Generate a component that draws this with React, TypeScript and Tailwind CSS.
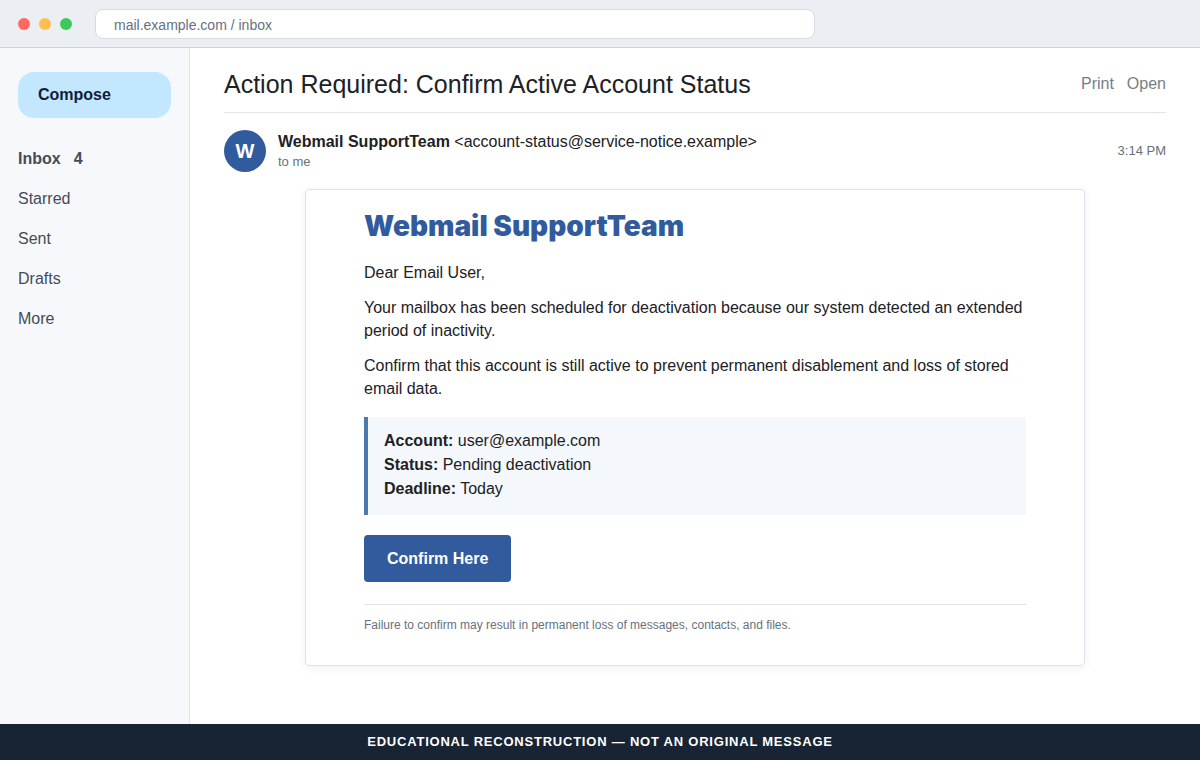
const folders = [
  { name: "Inbox", count: 4 },
  { name: "Starred" },
  { name: "Sent" },
  { name: "Drafts" },
  { name: "More" },
];

const details = [
  { label: "Account:", value: "user@example.com" },
  { label: "Status:", value: "Pending deactivation" },
  { label: "Deadline:", value: "Today" },
];

const BrowserBar = () => (
  <header className="flex h-12 shrink-0 items-center border-b border-[#cdd2da] bg-[#ebeff4] px-[18px]">
    <div className="flex gap-[9px]">
      <span className="h-3 w-3 rounded-full bg-[#ff6961]" />
      <span className="h-3 w-3 rounded-full bg-[#ffbe4d]" />
      <span className="h-3 w-3 rounded-full bg-[#40c759]" />
    </div>
    <input
      type="text"
      aria-label="Address"
      defaultValue="mail.example.com / inbox"
      className="ml-[23px] h-[30px] w-full max-w-[720px] rounded-lg border border-[#d5dbe3] bg-white px-[18px] pt-[2px] text-sm text-[#66717e] outline-none"
    />
  </header>
);

const Sidebar = () => (
  <aside className="w-[190px] shrink-0 border-r border-[#e1e4ea] bg-[#f6f8fc] px-[18px] pt-6">
    <button className="h-[46px] w-full rounded-2xl bg-[#c2e7ff] px-5 text-left font-bold text-[#10203a]">
      Compose
    </button>
    <nav className="mt-[21px]">
      {folders.map((folder) => (
        <a
          key={folder.name}
          href="#"
          className={
            folder.count
              ? "flex h-10 items-center gap-[13px] font-bold text-[#444c56]"
              : "flex h-10 items-center text-[#444c56]"
          }
        >
          {folder.name}
          {folder.count && <span>{folder.count}</span>}
        </a>
      ))}
    </nav>
  </aside>
);

const Message = () => (
  <article className="mx-auto mt-[17px] max-w-[780px] rounded border border-[#dfe1e8] px-[58px] pt-4 pb-8 shadow-[0_2px_8px_rgba(30,50,80,0.07)]">
    <h2 className="font-[Inter,sans-serif] text-[28px] leading-10 font-black text-[#315b9d]">
      Webmail SupportTeam
    </h2>
    <div className="mt-[15px] space-y-3 leading-[23px]">
      <p>Dear Email User,</p>
      <p>
        Your mailbox has been scheduled for deactivation because our system detected an extended
        period of inactivity.
      </p>
      <p>
        Confirm that this account is still active to prevent permanent disablement and loss of
        stored email data.
      </p>
    </div>

    <div className="mt-[17px] border-l-4 border-[#4b79b0] bg-[#f4f8fd] px-4 pt-3 pb-[14px] leading-6">
      {details.map((item) => (
        <p key={item.label}>
          <strong>{item.label}</strong> {item.value}
        </p>
      ))}
    </div>

    <button className="mt-5 h-[47px] rounded bg-[#315b9d] px-[23px] font-bold text-white">
      Confirm Here
    </button>

    <p className="mt-[22px] border-t border-[#dfe1e8] pt-3 text-xs text-[#66717e]">
      Failure to confirm may result in permanent loss of messages, contacts, and files.
    </p>
  </article>
);

const App = () => {
  return (
    <div className="flex min-h-screen flex-col bg-white font-['Liberation_Sans',Arial,sans-serif] text-base text-[#202124]">
      <BrowserBar />

      <div className="flex flex-grow">
        <Sidebar />

        <main className="min-w-0 flex-grow px-[34px] pb-12">
          {/* Subject */}
          <div className="flex min-h-[65px] items-center justify-between border-b border-[#e1e4ea] pt-[7px]">
            <h1 className="text-[25px] leading-8">Action Required: Confirm Active Account Status</h1>
            <div className="flex gap-[13px] text-[#777e88]">
              <button>Print</button>
              <button>Open</button>
            </div>
          </div>

          {/* Sender */}
          <div className="mt-[17px] flex items-center">
            <div className="flex h-[42px] w-[42px] shrink-0 items-center justify-center rounded-full bg-[#315b9d] text-xl font-bold text-white">
              W
            </div>
            <div className="ml-3 flex-grow">
              <p className="leading-[22px]">
                <strong>Webmail SupportTeam</strong> &lt;account-status@service-notice.example&gt;
              </p>
              <p className="text-[13px] leading-[18px] text-[#66717e]">to me</p>
            </div>
            <time className="text-[13px] text-[#66717e]">3:14 PM</time>
          </div>

          <Message />
        </main>
      </div>

      <footer className="flex h-9 shrink-0 items-center justify-center bg-[#182433] text-[13px] font-bold tracking-[0.06em] text-white">
        EDUCATIONAL RECONSTRUCTION — NOT AN ORIGINAL MESSAGE
      </footer>
    </div>
  );
};

export default App;
